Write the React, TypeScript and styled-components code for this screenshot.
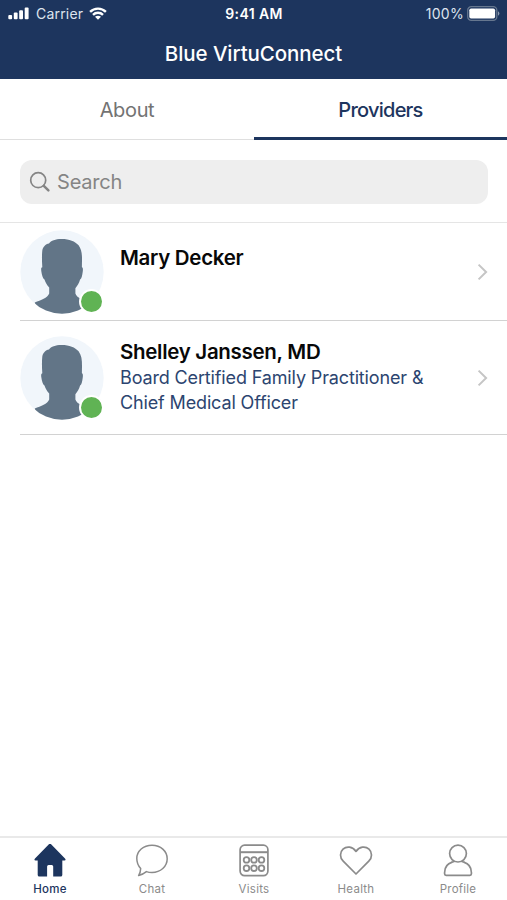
import React from "react";
import styled, { createGlobalStyle } from "styled-components";

const NAVY = "#1d355e";
const GREY = "#8b8b8b";

const GlobalStyle = createGlobalStyle`
  * { box-sizing: border-box; }
  body { margin: 0; background: #fff; font-family: Inter, "Liberation Sans", sans-serif; }
`;

const Screen = styled.main`
  width: 507px;
  height: 900px;
  display: flex;
  flex-direction: column;
  background: #fff;
  overflow: hidden;
`;

const Header = styled.header`
  height: 79px;
  flex: none;
  background: ${NAVY};
  color: #fff;
`;

const StatusBar = styled.div`
  height: 27px;
  display: grid;
  grid-template-columns: 1fr auto 1fr;
  align-items: center;
  padding: 0 7px 0 8px;
`;

const StatusGroup = styled.div<{ $end?: boolean }>`
  display: flex;
  align-items: center;
  justify-content: ${(p) => (p.$end ? "flex-end" : "flex-start")};
`;

const StatusText = styled.span<{ $bold?: boolean; $spacing?: string; $gap?: string }>`
  font-size: 14px;
  line-height: 27px;
  font-weight: ${(p) => (p.$bold ? 600 : 400)};
  letter-spacing: ${(p) => p.$spacing ?? "0"};
  margin: ${(p) => p.$gap ?? "0"};
  color: ${(p) => (p.$bold ? "#fff" : "#dde4ee")};
  white-space: nowrap;
`;

const Title = styled.h1`
  margin: 0;
  text-align: center;
  font-size: 20.5px;
  line-height: 54px;
  font-weight: 500;
  letter-spacing: -0.08px;
`;

const Tabs = styled.nav`
  height: 61px;
  flex: none;
  display: grid;
  grid-template-columns: 254px 253px;
`;

const Tab = styled.a<{ $active?: boolean }>`
  text-align: center;
  font-size: 20px;
  line-height: 62px;
  height: 61px;
  font-weight: ${(p) => (p.$active ? 500 : 400)};
  letter-spacing: ${(p) => (p.$active ? "-0.75px" : "-0.35px")};
  color: ${(p) => (p.$active ? NAVY : "#737373")};
  border-bottom: ${(p) => (p.$active ? `3px solid ${NAVY}` : "1px solid #dfdfdf")};
`;

const SearchArea = styled.section`
  height: 83px;
  flex: none;
  padding: 20px 19px 0 20px;
  border-bottom: 1px solid #e5e5e5;
`;

const SearchField = styled.div`
  height: 44px;
  border-radius: 12px;
  background: #eeeeee;
  display: flex;
  align-items: center;
  padding-left: 9px;
  gap: 6px;
  color: #858585;
  font-size: 20px;
  letter-spacing: -0.2px;
`;

const List = styled.ul`
  list-style: none;
  margin: 0;
  padding: 0 0 0 20px;
  flex: 1;
`;

const Row = styled.li<{ $height: number }>`
  height: ${(p) => p.$height}px;
  display: flex;
  align-items: center;
  border-bottom: 1px solid #d2d2d2;
  padding-right: 19px;
`;

const AvatarBox = styled.div`
  position: relative;
  width: 84px;
  height: 84px;
  flex: none;
  margin-right: 16px;
`;

const Presence = styled.span`
  position: absolute;
  left: 59px;
  top: 59px;
  width: 25px;
  height: 25px;
  border-radius: 50%;
  background: #60b354;
  border: 2.5px solid #fff;
`;

const Info = styled.div`
  flex: 1;
  padding-bottom: 1.5px;
`;

const Name = styled.div`
  font-size: 20.5px;
  line-height: 28px;
  font-weight: 600;
  letter-spacing: -0.3px;
  color: #080808;
`;

const Role = styled.div`
  min-height: 25px;
  font-size: 18px;
  line-height: 24.4px;
  letter-spacing: -0.14px;
  color: #2c4570;
  white-space: pre-line;
`;

const BottomBar = styled.nav`
  height: 64px;
  flex: none;
  border-top: 2px solid #e9e9e9;
  display: grid;
  grid-template-columns: repeat(5, 102px);
  margin-left: -1px;
`;

const BottomItem = styled.a<{ $active?: boolean }>`
  display: flex;
  flex-direction: column;
  align-items: center;
  padding-top: 6px;
  color: ${(p) => (p.$active ? NAVY : GREY)};
  font-size: 11.5px;
  line-height: 16px;
  font-weight: ${(p) => (p.$active ? 500 : 400)};
  letter-spacing: 0.25px;

  svg { margin-bottom: 3px; }
`;

const Signal = () => (
  <svg width="22" height="14" viewBox="0 0 22 14" fill="#fff">
    <rect x="0.3" y="8" width="3.8" height="4.3" rx="1" />
    <rect x="5.8" y="5.6" width="3.8" height="6.7" rx="1" />
    <rect x="11.2" y="3.3" width="3.8" height="9" rx="1" />
    <rect x="16.7" y="0.5" width="3.9" height="11.8" rx="1" />
  </svg>
);

const Wifi = () => (
  <svg width="18" height="14" viewBox="0 0 18 14" fill="none" stroke="#fff" strokeWidth="2.4">
    <path d="M1.1 4.9C5.5.5 12.5.5 16.9 4.9" />
    <path d="M4 7.8C6.8 5 11.2 5 14 7.8" />
    <path d="M9 12.8 6 9.8C7.7 8.3 10.3 8.3 12 9.8Z" fill="#fff" stroke="none" />
  </svg>
);

const Battery = () => (
  <svg width="33" height="15" viewBox="0 0 33 15">
    <rect x="0.7" y="0.7" width="29.1" height="13.6" rx="3.6" fill="none" stroke="#66778f" strokeWidth="1.3" />
    <rect x="2.3" y="2.4" width="25.8" height="10.2" rx="1.8" fill="#fff" />
    <path d="M31 5.2q1.4.8 1.4 2.3T31 9.8Z" fill="#8c9ab0" />
  </svg>
);

const SearchIcon = () => (
  <svg width="22" height="22" viewBox="0 0 22 22" fill="none" stroke="#858585" strokeLinecap="round">
    <circle cx="9.2" cy="9.2" r="7.5" strokeWidth="1.7" />
    <path d="m14.8 14.9 4.6 4.5" strokeWidth="2.5" />
  </svg>
);

const Avatar = ({ id }: { id: string }) => (
  <AvatarBox>
    <svg width="84" height="84" viewBox="0 0 84 84">
      <defs>
        <clipPath id={id}>
          <circle cx="42" cy="42" r="41.7" />
        </clipPath>
      </defs>
      <circle cx="42" cy="42" r="41.7" fill="#f1f6fb" />
      <path
        clipPath={`url(#${id})`}
        fill="#627587"
        d="M29 13.4C31 10.4 36 8.8 41.5 8.9C49 8.8 55 11.2 58.6 15.3C61.5 19.3 62.1 24 62 30L61.9 37.2C63.2 37.6 63 39.8 62.7 42C62.2 45.5 61.7 48.7 60.1 49.5C59.2 53 57.4 55.8 55.4 58.2V63.5C57 68 62.5 69.5 69 72.5L66 84H18L14.8 72.5C21 70 27.5 68 29.2 63.5V57.5C27 55.2 25.5 52.5 24.5 49.5C22.7 48.5 21.8 44.5 21.4 41.8C20.9 38.8 21.1 37.4 22.3 37.2C21.9 31 21.8 25 22.3 20.5C22.8 16.8 25.5 14 29 13.4Z"
      />
    </svg>
    <Presence />
  </AvatarBox>
);

const Chevron = () => (
  <svg width="11" height="18" viewBox="0 0 11 18" fill="none" stroke="#c5c5c5" strokeWidth="2">
    <path d="m1.6 1.6 7.5 7.4-7.5 7.4" />
  </svg>
);

const HomeIcon = () => (
  <svg width="34" height="34" viewBox="0 0 34 34" fill={NAVY}>
    <path d="M15.9.2Q17 -.8 18.1.2L32 14.4Q33.4 16.2 31.5 16.4H29.3V31Q29.3 32.6 27.7 32.6H20.2V22.6Q20.2 21 18.7 21H15.6Q14.1 21 14.1 22.6V32.6H6.3Q4.7 32.6 4.7 31V16.4H2.5Q.6 16.2 2 14.4Z" />
  </svg>
);

const ChatIcon = () => (
  <svg width="34" height="34" viewBox="0 0 34 34" fill="none" stroke={GREY} strokeWidth="1.5" strokeLinejoin="round">
    <path d="M17 1.2C8.4 1.2 1.8 6.9 1.8 14.4C1.8 18.6 3.2 21.7 5.7 24.4C5.6 27.2 4.9 29.5 3.6 31.6C6.6 30.9 9 29.5 11.4 27.6C13.4 28.3 15 28.5 17 28.5C25.6 28.5 32.2 22.5 32.2 14.8C32.2 7.1 25.6 1.2 17 1.2Z" />
  </svg>
);

const VisitsIcon = () => (
  <svg width="34" height="34" viewBox="0 0 34 34" fill="none" stroke={GREY} strokeWidth="1.7">
    <rect x="3.1" y="1.2" width="27.8" height="30.4" rx="4.5" />
    <path d="M3.1 8.2H30.9" strokeWidth="2" />
    {[15.9, 24.2].map((y) =>
      [9.5, 17, 24.5].map((x) => <circle key={`${x}-${y}`} cx={x} cy={y} r="2.8" strokeWidth="1.8" />)
    )}
  </svg>
);

const HeartIcon = () => (
  <svg width="34" height="34" viewBox="0 0 34 34" fill="none" stroke={GREY} strokeWidth="1.7" strokeLinejoin="round">
    <path d="M17 30 4.2 17.2C.5 13.4.8 8.2 4 5.2C7.7 1.8 13.6 2.5 17 7.4C20.4 2.5 26.3 1.8 30 5.2C33.2 8.2 33.5 13.4 29.8 17.2Z" />
  </svg>
);

const ProfileIcon = () => (
  <svg width="34" height="34" viewBox="0 0 34 34" fill="none" stroke={GREY} strokeWidth="1.7" strokeLinejoin="round">
    <circle cx="17" cy="9.6" r="8.4" />
    <path d="M11.2 18.1C6.5 19.6 3.6 23.6 3.6 28.4V29.8Q3.6 31.3 5.1 31.3H28.9Q30.4 31.3 30.4 29.8V28.4C30.4 23.6 27.5 19.6 22.8 18.1" />
    <path d="M10.8 18.3Q12.6 17.6 13.4 17.2M23.2 18.3Q21.4 17.6 20.6 17.2" />
  </svg>
);

const providers = [
  { id: "mary", name: "Mary Decker", role: "", height: 98 },
  { id: "shelley", name: "Shelley Janssen, MD", role: "Board Certified Family Practitioner &\nChief Medical Officer", height: 114 },
];

const destinations = [
  { label: "Home", Icon: HomeIcon, active: true },
  { label: "Chat", Icon: ChatIcon },
  { label: "Visits", Icon: VisitsIcon },
  { label: "Health", Icon: HeartIcon },
  { label: "Profile", Icon: ProfileIcon },
];

export default function App() {
  return (
    <>
      <GlobalStyle />
      <Screen>
        <Header>
          <StatusBar>
            <StatusGroup>
              <Signal />
              <StatusText $gap="0 6px" $spacing="0.2px">Carrier</StatusText>
              <Wifi />
            </StatusGroup>
            <StatusText $bold $spacing="0.4px">9:41 AM</StatusText>
            <StatusGroup $end>
              <StatusText $gap="0 3px 0 0" $spacing="0.3px">100%</StatusText>
              <Battery />
            </StatusGroup>
          </StatusBar>
          <Title>Blue VirtuConnect</Title>
        </Header>
        <Tabs>
          <Tab>About</Tab>
          <Tab $active>Providers</Tab>
        </Tabs>
        <SearchArea>
          <SearchField>
            <SearchIcon />
            <span>Search</span>
          </SearchField>
        </SearchArea>
        <List>
          {providers.map((p) => (
            <Row key={p.id} $height={p.height}>
              <Avatar id={p.id} />
              <Info>
                <Name>{p.name}</Name>
                <Role>{p.role}</Role>
              </Info>
              <Chevron />
            </Row>
          ))}
        </List>
        <BottomBar>
          {destinations.map(({ label, Icon, active }) => (
            <BottomItem key={label} $active={active}>
              <Icon />
              {label}
            </BottomItem>
          ))}
        </BottomBar>
      </Screen>
    </>
  );
}
